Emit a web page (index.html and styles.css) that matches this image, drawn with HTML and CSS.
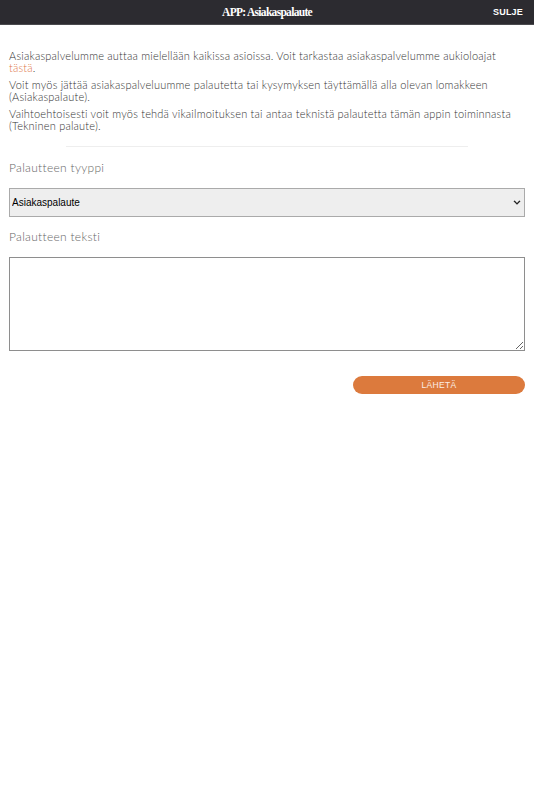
FILE: index.html
```html
<!DOCTYPE html>
<html lang="fi">
<head>
<meta charset="utf-8">
<title>APP: Asiakaspalaute</title>
<link rel="stylesheet" href="styles.css">
</head>
<body>
<header class="topbar">
  <div class="title">APP: Asiakaspalaute</div>
  <div class="close">SULJE</div>
</header>
<main class="content">
  <p class="intro">Asiakaspalvelumme auttaa mielellään kaikissa asioissa. Voit tarkastaa asiakaspalvelumme aukioloajat <a href="#" class="link">tästä</a>.</p>
  <p class="intro">Voit myös jättää asiakaspalveluumme palautetta tai kysymyksen täyttämällä alla olevan lomakkeen (Asiakaspalaute).</p>
  <p class="intro">Vaihtoehtoisesti voit myös tehdä vikailmoituksen tai antaa teknistä palautetta tämän appin toiminnasta (Tekninen palaute).</p>
  <hr class="divider">
  <label class="label" for="type">Palautteen tyyppi</label>
  <div class="select-wrap">
    <select id="type" class="select">
      <option>Asiakaspalaute</option>
      <option>Tekninen palaute</option>
    </select>
    <svg class="chev" width="8" height="6" viewBox="0 0 8 6"><path d="M0.5 1.2 L4 4.8 L7.5 1.2 L6.3 0.6 L4 2.9 L1.7 0.6 Z" fill="#222"/></svg>
  </div>
  <label class="label" for="text">Palautteen teksti</label>
  <textarea id="text" class="textarea"></textarea>
  <div class="actions">
    <button class="send">LÄHETÄ</button>
  </div>
</main>
</body>
</html>
```
FILE: styles.css
```css
* { box-sizing: border-box; }
html, body { margin: 0; padding: 0; background: #fff; }
body { font-family: "Lato", "Open Sans", sans-serif; color: #333; }

.topbar {
  height: 25px;
  background: #2c2b30;
  border-bottom: 1px solid #4a4a4e;
  display: flex;
  align-items: center;
  justify-content: center;
  position: relative;
}
.title {
  font-family: "Liberation Serif", "DejaVu Serif", serif;
  font-weight: bold;
  font-size: 11.5px;
  letter-spacing: -0.7px;
  color: #fff;
}
.close {
  position: absolute;
  right: 11px;
  top: 7px;
  font-family: "Liberation Sans", Arial, sans-serif;
  font-weight: bold;
  font-size: 9px;
  letter-spacing: 0.2px;
  color: #fff;
}

.content {
  padding: 25px 9px 0 9px;
  display: flex;
  flex-direction: column;
}
.intro {
  margin: 0 0 5px 0;
  font-size: 11px;
  line-height: 12px;
  font-weight: 300;
  letter-spacing: 0.2px;
  color: #333;
}
.link { color: #e0784a; text-decoration: none; }
.divider {
  border: none;
  border-top: 1px solid #eeeeee;
  margin: 9px 0 0 0;
  height: 0;
  width: 402px;
  align-self: center;
}
.label {
  margin-top: 14px;
  font-size: 12px;
  line-height: 14px;
  color: #666;
  letter-spacing: 0.3px;
  font-weight: 300;
}
.select-wrap {
  margin-top: 13px;
  position: relative;
}
.select {
  display: block;
  height: 29px;
  width: 100%;
  -webkit-appearance: none;
  appearance: none;
  background: #eeeeee;
  border: 1px solid #aaaaaa;
  border-radius: 0;
  font-family: "Liberation Sans", Arial, sans-serif;
  font-size: 10px;
  color: #000;
  padding: 0 2px;
}
.chev {
  position: absolute;
  right: 4px;
  top: 12px;
  pointer-events: none;
}
.select-wrap + .label { margin-top: 13px; }
.textarea {
  margin-top: 13px;
  height: 94px;
  width: 100%;
  border: 1px solid #8e8e8e;
  resize: vertical;
  font-family: "Liberation Sans", Arial, sans-serif;
}
.actions {
  display: flex;
  justify-content: flex-end;
  margin-top: 25px;
}
.send {
  width: 172px;
  height: 18px;
  border: none;
  border-radius: 9px;
  background: #dc7a3d;
  color: #fbeee5;
  font-family: "Liberation Sans", Arial, sans-serif;
  font-size: 8.5px;
  font-weight: normal;
  padding: 0;
  letter-spacing: 0.3px;
}
```
